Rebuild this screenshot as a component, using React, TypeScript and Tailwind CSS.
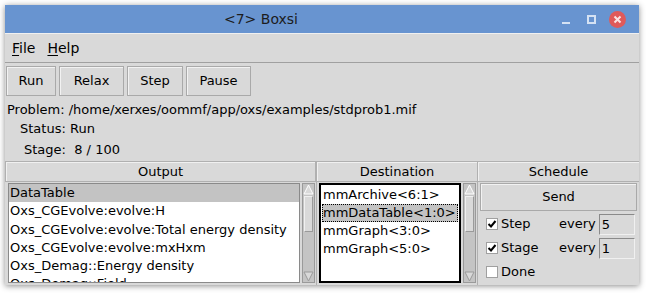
import React from 'react';

const font = { fontFamily: '"DejaVu Sans", "Liberation Sans", sans-serif' };

const TkButton = ({ label, w }: { label: string; w: string }) => (
    <div className={`${w} h-[30px] flex items-center justify-center border border-[#a9a9a9] shadow-[inset_1px_1px_0_#f2f2f2] text-[13px]`}>
        {label}
    </div>
);

const ScrollBar = () => (
    <div className="w-[13px] h-full flex flex-col bg-[#c4c4c4] border border-[#9a9a9a]">
        <svg width="11" height="11" viewBox="0 0 11 11"><path d="M1 10 L5.5 1 L10 10 Z" fill="#d9d9d9" stroke="#ffffff" strokeWidth="1" /></svg>
        <div className="flex-1 p-[1px]">
            <div className="h-[36px] bg-[#d9d9d9] border border-[#f0f0f0] border-r-[#9a9a9a] border-b-[#9a9a9a]" />
        </div>
        <svg width="11" height="11" viewBox="0 0 11 11"><path d="M1 1 L10 1 L5.5 10 Z" fill="#d9d9d9" stroke="#9a9a9a" strokeWidth="1" /></svg>
    </div>
);

const Check = ({ on }: { on: boolean }) => (
    <div className="w-[12px] h-[12px] bg-white border border-[#a0a0a0] flex items-center justify-center">
        {on && (
            <svg width="10" height="10" viewBox="0 0 10 10"><path d="M1.5 5 L4 7.5 L8.5 2" fill="none" stroke="#000" strokeWidth="2" /></svg>
        )}
    </div>
);

export default function App() {
    const outputs = [
        'DataTable',
        'Oxs_CGEvolve:evolve:H',
        'Oxs_CGEvolve:evolve:Total energy density',
        'Oxs_CGEvolve:evolve:mxHxm',
        'Oxs_Demag::Energy density',
        'Oxs_Demag::Field',
    ];
    const dests = ['mmArchive<6:1>', 'mmDataTable<1:0>', 'mmGraph<3:0>', 'mmGraph<5:0>'];

    return (
        <div className="w-[648px] h-[294px] bg-white pt-[5px] pl-[5px]" style={font}>
            <div className="w-[634px] h-[280px] bg-[#d9d9d9] flex flex-col shadow-[0_1px_6px_rgba(0,0,0,0.45)] text-black overflow-hidden">
                {/* title bar */}
                <div className="h-[28px] bg-[#6894d0] flex items-center shrink-0">
                    <div className="flex-1 text-center text-[14px] text-[#1c1c1c]">&lt;7&gt; Boxsi</div>
                    <div className="w-[122px] flex items-center">
                        <div className="ml-[45px] w-[8px] h-[2px] bg-[#d5e2f3] mt-[8px]" />
                        <div className="ml-[17px] w-[9px] h-[9px] border-2 border-[#d5e2f3]" />
                        <div className="ml-[13px] w-[17px] h-[17px] rounded-full bg-[#e05a5a] flex items-center justify-center">
                            <svg width="9" height="9" viewBox="0 0 9 9"><path d="M1.5 1.5 L7.5 7.5 M7.5 1.5 L1.5 7.5" stroke="#fbe3e3" strokeWidth="2" /></svg>
                        </div>
                    </div>
                </div>
                <div className="h-[1px] bg-[#f0f0f0] shrink-0" />
                {/* menu */}
                <div className="h-[29px] flex items-center gap-[12px] pl-[7px] text-[14px] border-b border-[#a0a0a0] shrink-0">
                    <span><span className="underline underline-offset-2">F</span>ile</span>
                    <span><span className="underline underline-offset-2">H</span>elp</span>
                </div>
                {/* buttons */}
                <div className="flex gap-[3px] pl-[1px] pt-[3px] shrink-0">
                    <TkButton label="Run" w="w-[50px]" />
                    <TkButton label="Relax" w="w-[65px]" />
                    <TkButton label="Step" w="w-[56px]" />
                    <TkButton label="Pause" w="w-[65px]" />
                </div>
                <div className="text-[13px] leading-[19px] pl-[2px] pt-[4px] shrink-0">
                    <div>Problem: /home/xerxes/oommf/app/oxs/examples/stdprob1.mif</div>
                    <div className="pl-[13px]">Status: Run</div>
                    <div className="pl-[17px] mt-[2px]">Stage:&nbsp; 8 / 100</div>
                </div>
                {/* panes */}
                <div className="flex flex-1 mt-[2px] text-[13px] min-h-0">
                    <div className="w-[312px] flex flex-col border-r border-[#b0b0b0]">
                        <div className="h-[21px] shrink-0 flex items-center justify-center border border-[#b0b0b0] shadow-[inset_1px_1px_0_#f0f0f0]">Output</div>
                        <div className="flex flex-1 min-h-0 pl-[3px] pr-[1px] pt-[1px] pb-[2px] gap-[2px]">
                            <div className="flex-1 bg-white border border-[#8a8a8a] overflow-hidden">
                                {outputs.map((o, i) => (
                                    <div key={o} className={`h-[18.3px] leading-[18px] pl-[1px] whitespace-nowrap ${i === 0 ? 'bg-[#c3c3c3]' : ''}`}>{o}</div>
                                ))}
                            </div>
                            <ScrollBar />
                        </div>
                    </div>
                    <div className="w-[161px] flex flex-col border-r border-[#b0b0b0]">
                        <div className="h-[21px] shrink-0 flex items-center justify-center border-y border-[#b0b0b0] shadow-[inset_1px_1px_0_#f0f0f0]">Destination</div>
                        <div className="flex flex-1 min-h-0 pl-[2px] pr-[1px] pt-[1px] pb-[2px] gap-[2px]">
                            <div className="flex-1 bg-white border-2 border-black p-[1px] overflow-hidden">
                                {dests.map((d, i) => (
                                    <div key={d} className={`h-[18px] leading-[16px] whitespace-nowrap ${i === 1 ? 'bg-[#c3c3c3] border border-dotted border-black' : 'border border-transparent'}`}>{d}</div>
                                ))}
                            </div>
                            <ScrollBar />
                        </div>
                    </div>
                    <div className="flex-1 flex flex-col">
                        <div className="h-[21px] shrink-0 flex items-center justify-center border-y border-[#b0b0b0] shadow-[inset_1px_1px_0_#f0f0f0]">Schedule</div>
                        <div className="mx-[2px] mt-[1px] h-[28px] shrink-0 flex items-center justify-center border border-[#a9a9a9] shadow-[inset_1px_1px_0_#f2f2f2]">Send</div>
                        <div className="flex flex-col pl-[8px] pt-[2px] gap-[2px]">
                            {[['Step', '5'], ['Stage', '1']].map(([l, v]) => (
                                <div key={l} className="flex items-center h-[22px]">
                                    <Check on />
                                    <span className="ml-[3px] w-[58px]">{l}</span>
                                    <span>every</span>
                                    <div className="ml-[3px] w-[36px] h-[21px] border border-[#8a8a8a] border-r-[#f0f0f0] border-b-[#f0f0f0] bg-[#d9d9d9] pl-[2px] leading-[19px]">{v}</div>
                                </div>
                            ))}
                            <div className="flex items-center h-[22px]">
                                <Check on={false} />
                                <span className="ml-[3px]">Done</span>
                            </div>
                        </div>
                    </div>
                </div>
            </div>
        </div>
    );
}
